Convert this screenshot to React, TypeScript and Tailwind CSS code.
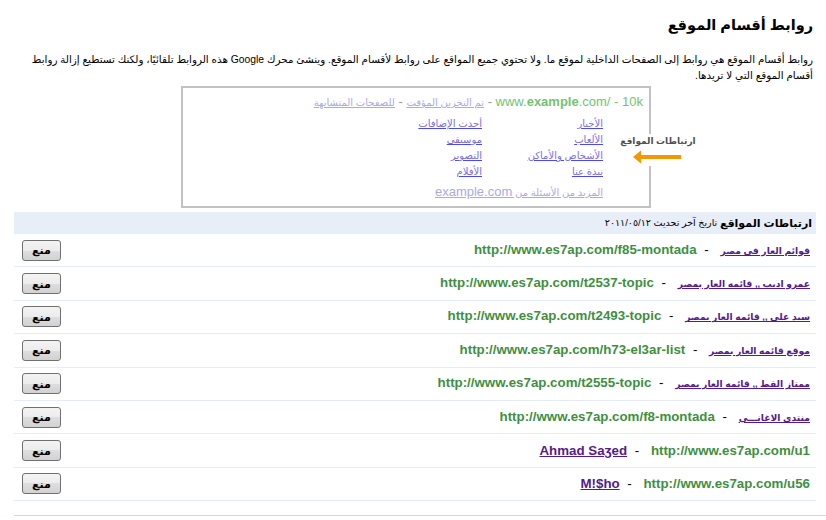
import React from "react";

const rows: { name: string; url: string }[] = [
  { name: "قوائم العار فى مصر", url: "http://www.es7ap.com/f85-montada" },
  { name: "عمرو اديب ,, قائمه العار بمصر", url: "http://www.es7ap.com/t2537-topic" },
  { name: "سيد على ,, قائمه العار بمصر", url: "http://www.es7ap.com/t2493-topic" },
  { name: "موقع قائمه العار بمصر", url: "http://www.es7ap.com/h73-el3ar-list" },
  { name: "ممتاز القط ,, قائمه العار بمصر", url: "http://www.es7ap.com/t2555-topic" },
  { name: "منتدى الاغانـــى", url: "http://www.es7ap.com/f8-montada" },
  { name: "Ahmad Saʒed", url: "http://www.es7ap.com/u1" },
  { name: "M!$ho", url: "http://www.es7ap.com/u56" },
];

const rightLinks = ["الأخبار", "الألعاب", "الأشخاص والأماكن", "نبذة عنا"];
const leftLinks = ["أحدث الإضافات", "موسيقى", "التصوير", "الأفلام"];

const isArabic = (s: string) => /[\u0600-\u06FF]/.test(s);

export default function App() {
  return (
    <div
      dir="rtl"
      className="w-[826px] h-[520px] overflow-hidden bg-white text-black font-['Liberation_Sans','DejaVu_Sans',sans-serif]"
    >
      <div className="pr-[13px] pl-[14px]">
        <h1 className="pt-[13px] text-[14.5px] leading-[25px] font-bold">روابط أقسام الموقع</h1>
        <p className="mt-[14px] text-[10.35px] leading-[16px]">
          روابط أقسام الموقع هي روابط إلى الصفحات الداخلية لموقع ما. ولا تحتوي جميع المواقع على روابط لأقسام الموقع. وينشئ محرك Google هذه الروابط تلقائيًا، ولكنك تستطيع إزالة روابط أقسام الموقع التي لا تريدها.
        </p>
      </div>

      <div className="mt-[2px] flex">
        <div className="relative mr-[175px] w-[470px] h-[122px] border-2 border-[#c2c2c2] pt-[6px] pr-[6px]">
          <div className="text-[13px] leading-[16px] whitespace-nowrap">
            <span className="text-[#74c274]">
              www.<b>example</b>.com/ - 10k
            </span>
            <span className="text-[#9a9a9a]"> - </span>
            <span className="text-[10px] leading-[16px] text-[#a9a9e6] underline">تم التخزين المؤقت</span>
            <span className="text-[#9a9a9a]"> - </span>
            <span className="text-[10px] leading-[16px] text-[#a9a9e6] underline">للصفحات المتشابهة</span>
          </div>
          <div className="mt-[5px] mr-[40px] flex text-[10px] leading-[16px]">
            <div className="w-[121px] flex flex-col items-start">
              {rightLinks.map((l) => (
                <span key={l} className="text-[#7a6ee6] underline decoration-[#4a4aee]">
                  {l}
                </span>
              ))}
            </div>
            <div className="flex flex-col items-start">
              {leftLinks.map((l) => (
                <span key={l} className="text-[#7a6ee6] underline decoration-[#4a4aee]">
                  {l}
                </span>
              ))}
            </div>
          </div>
          <div className="mt-[3px] mr-[40px] h-[16px] leading-[16px] whitespace-nowrap">
            <span className="text-[#aaaadd] underline">
              <span className="text-[10px] leading-[16px]">المزيد من الأسئلة من </span>
              <span className="text-[13px] leading-[16px]">example.com</span>
            </span>
          </div>

          <div className="absolute left-[434px] top-[46px] w-[80px] h-[32px] bg-white flex flex-col items-center">
            <span className="whitespace-nowrap text-[9px] leading-[14px] font-bold text-[#505050] ml-[2px]">ارتباطات المواقع</span>
            <svg width="50" height="14" viewBox="0 0 50 14" className="mt-[2px] ml-[2px]">
              <line x1="7" y1="7" x2="48" y2="7" stroke="#f39800" strokeWidth="4" />
              <polygon points="0,7 8,0.5 8,13.5" fill="#f39800" />
            </svg>
          </div>
        </div>
      </div>

      <div className="mt-[4px] ml-[14px] mr-[10px]">
        <div className="h-[22px] bg-[#e8eef8] pr-[4px] flex items-center whitespace-nowrap">
          <b className="text-[11px]">ارتباطات المواقع</b>
          <span className="text-[9.5px]">&nbsp;تاريخ آخر تحديث ٢٠١١/٠٥/١٢</span>
        </div>
        {rows.map((r) => (
          <div
            key={r.url}
            className="h-[33.4px] border-b border-[#e5ecf9] flex items-center justify-between pr-[6px] pl-[8px]"
          >
            <div className="text-[13.3px] leading-[16px] whitespace-nowrap">
              <a
                className={
                  isArabic(r.name)
                    ? "text-[9.2px] font-bold text-[#551a8b] underline cursor-pointer"
                    : "font-bold text-[#551a8b] underline cursor-pointer"
                }
              >
                {r.name}
              </a>
              <span className="pr-[8px] pl-[4px]"> - </span>
              <span className="font-bold text-[#3f8f3f]">{r.url}</span>
            </div>
            <button className="w-[39px] h-[21px] rounded-[3px] border border-[#707070] bg-[linear-gradient(to_bottom,#f3f3f3_0%,#ececec_50%,#dedede_50%,#d2d2d2_100%)] text-[11px] font-bold leading-[16px] text-black">
              منع
            </button>
          </div>
        ))}
      </div>
      <div className="mt-[14px] ml-[14px] h-px bg-[#cdd8ee]" />
    </div>
  );
}
